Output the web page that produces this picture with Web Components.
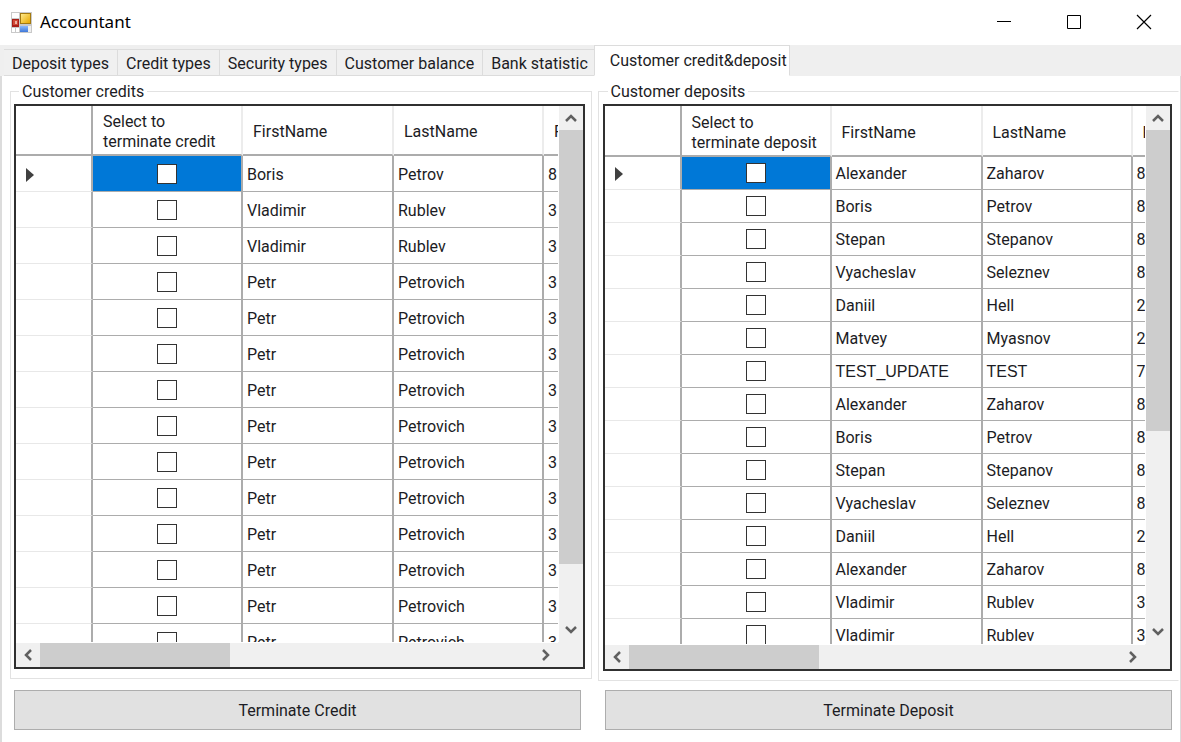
<!DOCTYPE html>
<html lang="en">
<head>
<meta charset="utf-8">
<title>Accountant</title>
<style>
html, body { height: 100%; margin: 0; }
body { font: 16px/20px Roboto, "Liberation Sans", sans-serif; color: #1c1c24; background: #fff; }
</style>
</head>
<body>
<accountant-window></accountant-window>

<template id="window-tpl">
<style>
:host { display: flex; flex-direction: column; height: 100%; min-height: 400px; overflow: hidden; background: #fff; }
main { flex: 1; min-height: 0; display: flex; flex-direction: column; border: 1px solid #dcdcdc; border-width: 1px 1px 0 2px; margin-top: -1px; padding: 5px 1px 12px 8px; }
.groups { flex: 1; min-height: 0; display: grid; grid-template-columns: 1fr 1fr; grid-template-rows: minmax(0, 1fr); gap: 6px; }
.groups > :first-child { margin-bottom: 2px; }
.actions { display: grid; grid-template-columns: 1fr 1fr; gap: 24px; margin: 9px 7px 0 4px; }
</style>
<title-bar>Accountant</title-bar>
<tab-strip></tab-strip>
<main>
  <div class="groups">
    <group-box label="Customer credits"><data-grid kind="credit"></data-grid></group-box>
    <group-box label="Customer deposits" open><data-grid kind="deposit"></data-grid></group-box>
  </div>
  <div class="actions">
    <push-button>Terminate Credit</push-button>
    <push-button>Terminate Deposit</push-button>
  </div>
</main>
</template>

<template id="title-tpl">
<style>
:host { display: flex; align-items: center; height: 45px; flex: none; padding: 0 11px 1px; font: 17px/24px "Noto Sans", sans-serif; color: #000; box-sizing: border-box; }
h1 { font: inherit; margin: 0 auto 0 8px; }
button { width: 44px; height: 44px; margin-left: 26px; padding: 0; border: 0; background: none; display: grid; place-items: center; }
button:last-child { margin-right: 4px; }
svg { display: block; }
</style>
<svg width="21" height="21" viewBox="0 0 21 21">
  <defs>
    <linearGradient id="y" x2="1" y2="1"><stop offset="0" stop-color="#ffe98a"/><stop offset="1" stop-color="#e8a800"/></linearGradient>
    <linearGradient id="b" x2="0" y2="1"><stop offset="0" stop-color="#8ab8ff"/><stop offset="1" stop-color="#3f78d8"/></linearGradient>
  </defs>
  <rect width="21" height="21" fill="#c9c9c9"/>
  <rect x="1" y="1" width="7" height="5" fill="#fff"/>
  <rect x="1" y="16" width="3" height="4" fill="#fff"/><rect x="5" y="16" width="3" height="4" fill="#fff"/>
  <rect x="17" y="14" width="3" height="6" fill="#eee"/>
  <rect x="1" y="7" width="7" height="8" fill="#a81f18"/><rect x="2" y="8" width="5" height="5" fill="#cf4a38"/><rect x="4" y="9" width="2" height="3" fill="#f0b0a0"/>
  <rect x="9" y="1" width="11" height="11" fill="#a47a10"/><rect x="10" y="2" width="9" height="9" fill="url(#y)"/>
  <rect x="9" y="14" width="8" height="6" fill="url(#b)"/>
</svg>
<h1><slot></slot></h1>
<button aria-label="Minimize"><svg width="16" height="16"><path d="M1 7.500h14" stroke="#000"/></svg></button>
<button aria-label="Maximize"><svg width="16" height="16"><path d="M1.500 1.500h13v13h-13z" stroke="#000" fill="none"/></svg></button>
<button aria-label="Close"><svg width="16" height="16"><path d="M1 1l14 14M15 1L1 15" stroke="#000" stroke-width="1.200"/></svg></button>
</template>

<template id="tabs-tpl">
<style>
:host { display: flex; flex: none; align-items: flex-end; height: 31px; padding-left: 4px; background: #efefef; position: relative; }
button { font: inherit; color: inherit; box-sizing: border-box; height: 27px; padding: 2px 8px 0; border: 1px solid #dcdcdc; border-left-width: 0; background: #f0f0f0; white-space: nowrap; }
button:first-child { border-left-width: 1px; }
button[aria-selected=true] { height: 31px; margin-left: -3px; padding: 0 2px 0 15px; background: #fff; border-left-width: 1px; border-bottom-color: #fff; }
</style>
<button role="tab">Deposit types</button><button role="tab">Credit types</button><button role="tab">Security types</button><button role="tab">Customer balance</button><button role="tab">Bank statistic</button><button role="tab" aria-selected="true">Customer credit&amp;deposit</button>
</template>

<template id="group-tpl">
<style>
:host { display: flex; min-width: 0; min-height: 0; }
fieldset { flex: 1; min-width: 0; box-sizing: border-box; margin: 0; padding: 2px 6px 9px 3px; border: 1px solid #e2e2e2; display: flex; }
:host([open]) fieldset { border-right-color: #fff; padding-left: 4px; }
legend { margin-left: 5px; padding: 1px 3px 0; }
</style>
<fieldset><legend></legend><slot></slot></fieldset>
</template>

<template id="grid-tpl">
<style>
:host { flex: 1; min-width: 0; min-height: 0; display: grid; grid-template: minmax(0, 1fr) 24px / minmax(0, 1fr) 24px; column-gap: 1px; row-gap: 1px; border: 2px solid #303030; background: #fff; }
.view { overflow: hidden; }
table { table-layout: fixed; width: 680px; border-collapse: separate; border-spacing: 0; }
th, td { box-sizing: border-box; padding: 2px 4px 0; text-align: left; font-weight: 400; border: 0 solid #acacac; border-width: 0 2px 1px 0; white-space: nowrap; height: var(--row); }
thead th { height: var(--head); padding: 4px 10px 0; border-bottom-width: 2px; border-right-color: #ececec; }
thead th:first-child { border-right-color: #acacac; }
tbody th { border-bottom-color: #e8e8e8; padding-left: 10px; }
td.wide { font-family: "Liberation Sans", sans-serif; }
td.pick { text-align: center; padding: 0; }
td.on { background: #0078d7; }
input { appearance: none; display: block; box-sizing: border-box; width: 20px; height: 20px; margin: 0 auto; border: 1px solid #333; background: #fff; }
svg { display: block; }
.v, .h { display: flex; background: #f0f0f0; }
.v { flex-direction: column; }
.h button:last-child { margin-left: auto; }
.v button:last-child { margin-top: auto; }
button { width: 24px; height: 24px; flex: none; padding: 0; border: 0; background: none; display: grid; place-items: center; }
.thumb { background: #cdcdcd; }
.v .thumb { width: 24px; height: var(--thumb); }
.h .thumb { width: 190px; }
.corner { background: #f0f0f0; margin-left: -1px; margin-top: -1px; }
</style>
<div class="view"><table>
  <colgroup><col style="width:77px"><col style="width:150px"><col style="width:151px"><col style="width:150px"><col style="width:152px"></colgroup>
  <thead><tr><th></th><th>Select to<br><span></span></th><th>FirstName</th><th>LastName</th><th>P</th></tr></thead>
  <tbody></tbody>
</table></div>
<div class="v">
  <button aria-label="Scroll up"><svg width="14" height="14"><path d="M2 10l5-5 5 5" fill="none" stroke="#606060" stroke-width="2.500"/></svg></button>
  <div class="thumb"></div>
  <button aria-label="Scroll down"><svg width="14" height="14"><path d="M2 4l5 5 5-5" fill="none" stroke="#606060" stroke-width="2.500"/></svg></button>
</div>
<div class="h">
  <button aria-label="Scroll left"><svg width="14" height="14"><path d="M10 2L5 7l5 5" fill="none" stroke="#606060" stroke-width="2.500"/></svg></button>
  <div class="thumb"></div>
  <button aria-label="Scroll right"><svg width="14" height="14"><path d="M4 2l5 5-5 5" fill="none" stroke="#606060" stroke-width="2.500"/></svg></button>
</div>
<div class="corner"></div>
</template>

<template id="button-tpl">
<style>
:host { display: block; }
button { display: block; width: 100%; height: 40px; padding: 1px 0 0; font: inherit; color: inherit; background: #e1e1e1; border: 1px solid #adadad; }
</style>
<button><slot></slot></button>
</template>

<script>
const base = id => class extends HTMLElement {
  constructor() {
    super();
    this.attachShadow({ mode: 'open' }).append(document.getElementById(id).content.cloneNode(true));
  }
};

const people = {
  credit: [['Boris', 'Petrov', '8'], ['Vladimir', 'Rublev', '3'], ['Vladimir', 'Rublev', '3'],
    ...Array.from({ length: 11 }, () => ['Petr', 'Petrovich', '3'])],
  deposit: [['Alexander', 'Zaharov', '8'], ['Boris', 'Petrov', '8'], ['Stepan', 'Stepanov', '8'],
    ['Vyacheslav', 'Seleznev', '8'], ['Daniil', 'Hell', '2'], ['Matvey', 'Myasnov', '2'],
    ['TEST_UPDATE', 'TEST', '7'], ['Alexander', 'Zaharov', '8'], ['Boris', 'Petrov', '8'],
    ['Stepan', 'Stepanov', '8'], ['Vyacheslav', 'Seleznev', '8'], ['Daniil', 'Hell', '2'],
    ['Alexander', 'Zaharov', '8'], ['Vladimir', 'Rublev', '3'], ['Vladimir', 'Rublev', '3']]
};
const marker = '<svg width="8" height="14"><path d="M0 0l8 7-8 7z" fill="#404040"/></svg>';
const nameCell = text => `<td${text.startsWith('TEST') ? ' class="wide"' : ''}>${text}</td>`;

customElements.define('title-bar', base('title-tpl'));
customElements.define('tab-strip', base('tabs-tpl'));
customElements.define('push-button', base('button-tpl'));
customElements.define('group-box', class extends base('group-tpl') {
  connectedCallback() {
    this.shadowRoot.querySelector('legend').textContent = this.getAttribute('label');
  }
});
customElements.define('data-grid', class extends base('grid-tpl') {
  connectedCallback() {
    const kind = this.getAttribute('kind');
    this.style.setProperty('--head', kind === 'credit' ? '50px' : '51px');
    this.style.setProperty('--row', kind === 'credit' ? '36px' : '33px');
    this.style.setProperty('--thumb', kind === 'credit' ? '81%' : '56%');
    this.shadowRoot.querySelector('span').textContent = 'terminate ' + kind;
    this.shadowRoot.querySelector('tbody').innerHTML = people[kind].map(([first, last, no], i) =>
      `<tr><th>${i ? '' : marker}</th><td class="pick${i ? '' : ' on'}"><input type="checkbox" aria-label="Terminate ${kind} of ${first} ${last}"></td>${nameCell(first)}${nameCell(last)}<td>${no}</td></tr>`).join('');
  }
});
customElements.define('accountant-window', base('window-tpl'));
</script>
</body>
</html>
